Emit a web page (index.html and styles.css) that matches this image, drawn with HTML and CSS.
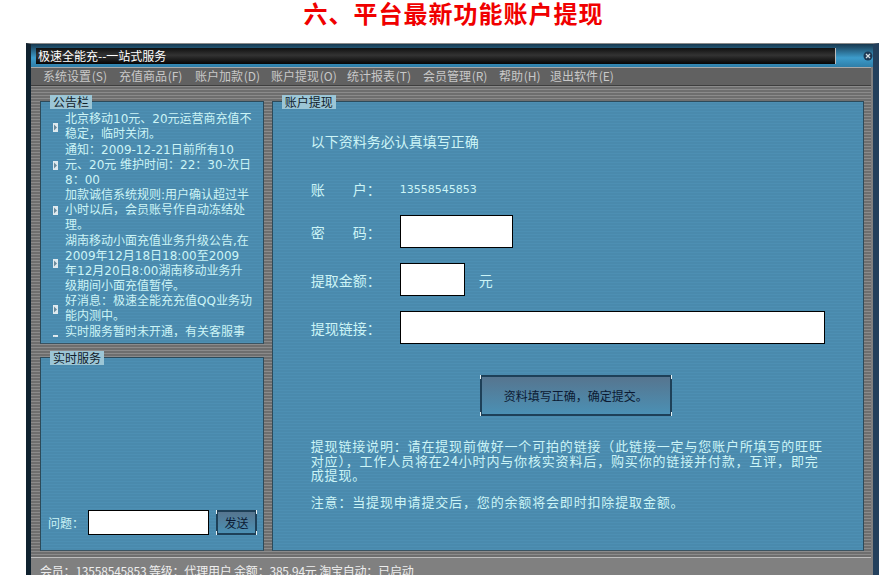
FILE: index.html
```html
<!DOCTYPE html>
<html lang="zh-CN">
<head>
    <meta charset="UTF-8">
    <meta name="viewport" content="width=device-width, initial-scale=1.0">
    <title>六、平台最新功能账户提现</title>
    <link rel="stylesheet" href="styles.css">
</head>
<body>
    <h1 class="page-title">六、平台最新功能账户提现</h1>
    <div class="window">
        <div class="titlebar">
            <div class="titlebar-text">极速全能充--一站式服务</div>
            <div class="close-btn">
                <svg width="10" height="10" viewBox="0 0 10 10"><circle cx="5" cy="5" r="4.5" fill="#1d3a55"/><path d="M3 3l4 4M7 3l-4 4" stroke="#d5dde2" stroke-width="1.3"/></svg>
            </div>
        </div>
        <div class="menubar">
            <span class="menu-item">系统设置 (S)</span>
            <span class="menu-item">充值商品 (F)</span>
            <span class="menu-item">账户加款 (D)</span>
            <span class="menu-item">账户提现 (O)</span>
            <span class="menu-item">统计报表 (T)</span>
            <span class="menu-item">会员管理 (R)</span>
            <span class="menu-item">帮助 (H)</span>
            <span class="menu-item">退出软件 (E)</span>
        </div>
        <div class="content">
            <div class="side">
                <div class="panel notice-panel">
                    <div class="panel-title">公告栏</div>
                    <div class="notice-list">
                        <div class="notice"><svg class="arrow" width="5" height="9" viewBox="0 0 5 9"><rect width="5" height="9" fill="#dfeaef"/><path d="M1 1.5L4 4.5L1 7.5Z" fill="#6b8a9c"/></svg><p>北京移动10元、20元运营商充值不稳定，临时关闭。</p></div>
                        <div class="notice"><svg class="arrow" width="5" height="9" viewBox="0 0 5 9"><rect width="5" height="9" fill="#dfeaef"/><path d="M1 1.5L4 4.5L1 7.5Z" fill="#6b8a9c"/></svg><p>通知：2009-12-21日前所有10元、20元 维护时间：22：30-次日8：00</p></div>
                        <div class="notice"><svg class="arrow" width="5" height="9" viewBox="0 0 5 9"><rect width="5" height="9" fill="#dfeaef"/><path d="M1 1.5L4 4.5L1 7.5Z" fill="#6b8a9c"/></svg><p>加款诚信系统规则:用户确认超过半小时以后，会员账号作自动冻结处理。</p></div>
                        <div class="notice"><svg class="arrow" width="5" height="9" viewBox="0 0 5 9"><rect width="5" height="9" fill="#dfeaef"/><path d="M1 1.5L4 4.5L1 7.5Z" fill="#6b8a9c"/></svg><p>湖南移动小面充值业务升级公告,在2009年12月18日18:00至2009<br>年12月20日8:00湖南移动业务升级期间小面充值暂停。</p></div>
                        <div class="notice"><svg class="arrow" width="5" height="9" viewBox="0 0 5 9"><rect width="5" height="9" fill="#dfeaef"/><path d="M1 1.5L4 4.5L1 7.5Z" fill="#6b8a9c"/></svg><p>好消息：极速全能充充值QQ业务功能内测中。</p></div>
                        <div class="notice"><svg class="arrow" width="5" height="9" viewBox="0 0 5 9"><rect width="5" height="9" fill="#dfeaef"/><path d="M1 1.5L4 4.5L1 7.5Z" fill="#6b8a9c"/></svg><p>实时服务暂时未开通，有关客服事宜请联系在线客服人员。</p></div>
                    </div>
                </div>
                <div class="panel chat-panel">
                    <div class="panel-title">实时服务</div>
                    <div class="chat-form">
                        <span class="chat-label">问题：</span>
                        <input class="field chat-input" type="text">
                        <button class="skin-btn send-btn">发送</button>
                    </div>
                </div>
            </div>
            <div class="panel main-panel">
                <div class="panel-title">账户提现</div>
                <div class="main-body">
                    <div class="form-head">以下资料务必认真填写正确</div>
                    <div class="form-row account-row"><span class="field-label"><span class="label-name">账户</span>：</span><span class="account">13558545853</span></div>
                    <div class="form-row"><span class="field-label"><span class="label-name">密码</span>：</span><input class="field pwd-input" type="password"></div>
                    <div class="form-row"><span class="field-label"><span class="label-name">提取金额</span>：</span><input class="field money-input" type="text"><span class="unit">元</span></div>
                    <div class="form-row"><span class="field-label"><span class="label-name">提现链接</span>：</span><input class="field link-input" type="text"></div>
                    <div class="submit-row"><button class="skin-btn submit-btn">资料填写正确，确定提交。</button></div>
                    <p class="explain">提现链接说明：请在提现前做好一个可拍的链接（此链接一定与您账户所填写的旺旺对应），工作人员将在24小时内与你核实资料后，购买你的链接并付款，互评，即完成提现。</p>
                    <p class="explain note">注意：当提现申请提交后，您的余额将会即时扣除提取金额。</p>
                </div>
            </div>
        </div>
        <div class="statusbar">会员：13558545853 等级：代理用户 余额：385.94元 淘宝自动：已启动</div>
    </div>
</body>
</html>
```

FILE: styles.css
```css
html, body {
    margin: 0;
    padding: 0;
    height: 575px;
    overflow: hidden;
    background: #fff;
}
body {
    font-family: "DejaVu Sans", "Noto Sans CJK SC", sans-serif;
    font-size: 12px;
}
.page-title {
    height: 43px;
    margin: 0;
    padding-left: 25px;
    box-sizing: border-box;
    text-align: center;
    font-family: "Noto Sans CJK SC", sans-serif;
    font-size: 24px;
    font-weight: bold;
    line-height: 25px;
    letter-spacing: 1px;
    color: #f00000;
}
.window {
    width: 853px;
    height: 532px;
    margin-left: 26px;
    box-sizing: border-box;
    overflow: hidden;
    background: #808080;
    border-top: 1px solid #8a8a8a;
    border-left: 5px solid #10222f;
    border-right: 6px solid #23405c;
}
.titlebar {
    display: flex;
    align-items: center;
    height: 23px;
    padding: 3px 0 3px 5px;
    box-sizing: border-box;
    background: linear-gradient(#17384f, #3d9ccb 60%, #2f7ea8);
}
.titlebar-text {
    width: 800px;
    height: 16px;
    padding-left: 2px;
    box-sizing: border-box;
    background: linear-gradient(#111, #333 45%, #050505);
    border-right: 1px solid #bbb;
    color: #fff;
    line-height: 15px;
    font-family: "Noto Sans CJK SC", sans-serif;
}
.close-btn {
    display: flex;
    margin-left: 27px;
}
.menubar {
    display: flex;
    gap: 11px;
    height: 19px;
    padding-left: 12px;
    box-sizing: border-box;
    background: #616161;
    border-top: 1px solid #a9a9a9;
    border-bottom: 1px solid #3e3e3e;
    margin-right: 2px;
    color: #c8c8c8;
    line-height: 16px;
    font-family: "Noto Sans CJK SC", sans-serif;
}
.menu-item {
    width: 65px;
    white-space: nowrap;
    word-spacing: -2px;
}
.menu-item:nth-child(7) {
    width: 40px;
}
.content {
    display: flex;
    gap: 8px;
    height: 472px;
    padding: 15px 7px 6px 9px;
    box-sizing: border-box;
    background: repeating-linear-gradient(#8b8b8b 0 1px, #6e6e6e 1px 3px);
    border-bottom: 1px solid #bdbdbd;
    margin-right: 2px;
}
.side {
    display: flex;
    flex-direction: column;
    gap: 13px;
    width: 224px;
}
.panel {
    box-sizing: border-box;
    background: repeating-linear-gradient(#4d8fb3 0 1px, #4a8aad 1px 3px);
    border: 1px solid #2c4a5a;
    border-bottom-color: #3b5361;
    color: #ccf4f6;
}
.panel-title {
    width: fit-content;
    margin: -7px 0 0 9px;
    padding: 0 3px;
    height: 14px;
    line-height: 14px;
    background: #9cc6d6;
    color: #10202a;
    font-family: "Noto Sans CJK SC", sans-serif;
}
.notice-panel {
    height: 243px;
}
.notice-list {
    height: 228px;
    box-sizing: border-box;
    overflow: hidden;
    padding: 3px 0 0 12px;
}
.notice {
    display: flex;
    align-items: center;
    gap: 7px;
    margin-bottom: 0.6px;
}
.notice p {
    margin: 0;
    width: 188px;
    line-height: 15px;
}
.arrow {
    flex: none;
}
.chat-panel {
    display: flex;
    flex-direction: column;
    justify-content: space-between;
    height: 194px;
}
.chat-form {
    display: flex;
    align-items: center;
    padding: 0 0 15px 7px;
}
.chat-label {
    width: 40px;
}
.field {
    box-sizing: border-box;
    margin: 0;
    padding: 0;
    background: #fff;
    border: 1px solid #000;
    outline: none;
}
.chat-input {
    width: 121px;
    height: 25px;
}
.skin-btn {
    position: relative;
    box-sizing: border-box;
    padding: 0;
    border: 2px solid #1e4058;
    background: linear-gradient(#56758f, #4b90b4);
    color: #0b1a33;
    font: 12px "Noto Sans CJK SC", sans-serif;
}
.skin-btn::before {
    content: "";
    position: absolute;
    inset: -2px;
    background:
        linear-gradient(#e8f2f4, #e8f2f4) left top / 1px 4px no-repeat,
        linear-gradient(#e8f2f4, #e8f2f4) right top / 1px 4px no-repeat,
        linear-gradient(#e8f2f4, #e8f2f4) left bottom / 1px 4px no-repeat,
        linear-gradient(#e8f2f4, #e8f2f4) right bottom / 1px 4px no-repeat;
}
.send-btn {
    width: 41px;
    height: 25px;
    margin-left: 7px;
}
.main-panel {
    width: 593px;
    height: 450px;
}
.main-body {
    padding-left: 38px;
}
.form-head {
    margin-top: 22px;
    font-family: "Noto Sans CJK SC", sans-serif;
    font-size: 14px;
    line-height: 20px;
}
.form-row {
    display: flex;
    align-items: center;
    margin-bottom: 15px;
    font-family: "Noto Sans CJK SC", sans-serif;
    font-size: 14px;
}
.account-row {
    height: 20px;
    margin: 28px 0 16px;
}
.field-label {
    flex: none;
    width: 89px;
}
.label-name {
    display: inline-block;
    width: 56px;
    text-align-last: justify;
}
.account {
    font-family: "DejaVu Sans", sans-serif;
    font-size: 11px;
}
.pwd-input {
    width: 113px;
    height: 33px;
}
.money-input {
    width: 65px;
    height: 33px;
}
.unit {
    margin-left: 14px;
}
.link-input {
    width: 425px;
    height: 33px;
}
.submit-row {
    margin: 31px 0 0 169px;
}
.submit-btn {
    width: 192px;
    height: 41px;
}
.explain {
    width: 516px;
    margin: 23px 0 0;
    font-size: 13px;
    font-family: "Noto Sans CJK SC", sans-serif;
    line-height: 14.5px;
    letter-spacing: 0.84px;
}
.note {
    margin-top: 12px;
}
.statusbar {
    padding: 5px 0 0 9px;
    color: #eee;
    line-height: 16px;
    white-space: nowrap;
    letter-spacing: -0.2px;
    font-family: "Noto Sans CJK SC", sans-serif;
}
```
